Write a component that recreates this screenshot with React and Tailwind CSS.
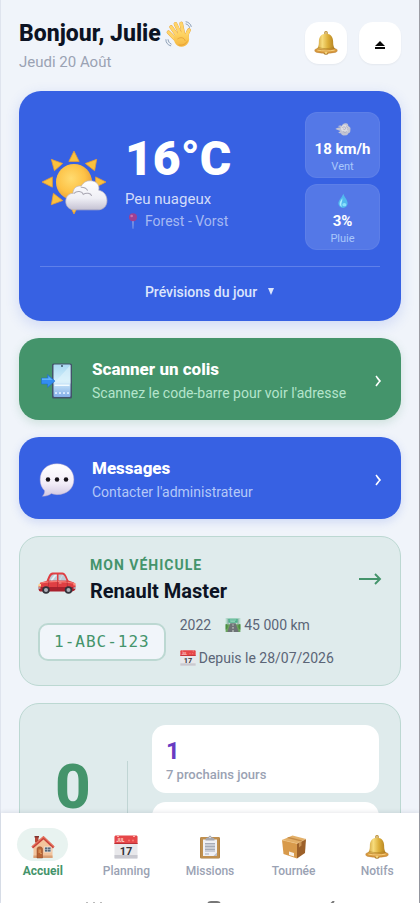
import React, { useState } from 'react';

const WaveIcon = ({ className }) => (
    <svg viewBox="0 0 64 64" className={className} aria-hidden="true">
        <defs>
            <linearGradient id="hand" x1="0" y1="0" x2="0" y2="1">
                <stop offset="0" stopColor="#ffd766" />
                <stop offset="1" stopColor="#f5b640" />
            </linearGradient>
        </defs>
        <g fill="none" stroke="#e3a03a" strokeWidth="8.5" strokeLinecap="round">
            <path d="M29 37 14 16M35 32 24 9M42 32 37 8M23 43 8 28M50 40c-1-6 1-11 5-17" />
        </g>
        <g fill="none" stroke="#ffd56a" strokeWidth="7" strokeLinecap="round">
            <path d="M29 37 14 16M35 32 24 9M42 32 37 8M23 43 8 28M50 40c-1-6 1-11 5-17" />
        </g>
        <path d="M19 38 33 28l12 3 8 5c3 5 3 11 0 16-5 9-16 12-24 7-6-4-9-12-10-21z" fill="url(#hand)" />
        <path d="M29 43c7-5 15-3 17 4M32 57c8 2 16-2 19-9" fill="none" stroke="#dc922b" strokeWidth="1.4" strokeLinecap="round" />
        <path d="M48 4c6 1 11 5 12 11M48 9c4 1 7 4 8 8M2 45c0 7 4 12 11 14M7 45c1 5 3 8 7 10" fill="none" stroke="#7189a5" strokeWidth="1.8" strokeLinecap="round" />
    </svg>
);

const BellIcon = ({ className }) => (
    <svg viewBox="0 0 64 64" className={className} aria-hidden="true">
        <defs>
            <linearGradient id="bell" x1="0" x2="1" y1="0" y2="0">
                <stop offset="0" stopColor="#c4902a" />
                <stop offset=".32" stopColor="#f7dc7c" />
                <stop offset=".6" stopColor="#dcae38" />
                <stop offset="1" stopColor="#a8741c" />
            </linearGradient>
        </defs>
        <circle cx="32" cy="5" r="3.5" fill="none" stroke="#b98b2c" strokeWidth="3" />
        <ellipse cx="32" cy="58" rx="7" ry="5" fill="#a0701e" />
        <path d="M32 7c-13 0-19 9-19 21 0 12-2 17-8 22v4h54v-4c-6-5-8-10-8-22C51 16 45 7 32 7z" fill="url(#bell)" />
        <path d="M11 44c13 4 29 4 42 0" fill="none" stroke="#b08024" strokeWidth="1.6" />
        <path d="M2 52c0-3 3-5 6-5 14 4 34 4 48 0 3 0 6 2 6 5s-3 5-6 5c-16 3-32 3-48 0-3 0-6-2-6-5z" fill="#d99a3e" stroke="#a4691f" />
        <path d="M9 51c15 3 31 3 46 0" fill="none" stroke="#ffe191" strokeWidth="2" />
        <ellipse cx="32" cy="58" rx="4" ry="3" fill="#f2d27a" />
    </svg>
);

const SunCloudIcon = ({ className }) => (
    <svg viewBox="-1 -3 66 66" className={className} aria-hidden="true">
        <defs>
            <radialGradient id="sun" cx=".42" cy=".4" r=".6">
                <stop offset="0" stopColor="#ffdb70" />
                <stop offset=".65" stopColor="#fdc246" />
                <stop offset="1" stopColor="#e9a23a" />
            </radialGradient>
            <linearGradient id="cloud" x1="0" y1="0" x2="0" y2="1">
                <stop offset="0" stopColor="#ffffff" />
                <stop offset=".6" stopColor="#efeff5" />
                <stop offset="1" stopColor="#c5c2d3" />
            </linearGradient>
        </defs>
        <g fill="#fbc13e" stroke="#e79d35" strokeWidth=".8" strokeLinejoin="round">
            <path d="m32 1 5 10H27zM54 9l-2 11-9-7zM63 31l-10 5V26zM54 53l-11-3 8-8zM32 62l-5-10h10zM10 53l2-11 9 7zM1 31l10-5v10zM10 9l11 4-8 7z" />
        </g>
        <circle cx="32" cy="31" r="17.5" fill="url(#sun)" />
        <path d="M32 58c-5 0-8-4-8-8 0-5 3-8 7-8 0-5 4-8 8-7 2-4 6-6 11-5 5 1 7 5 6 9 5 1 8 5 8 10 0 6-4 9-9 9z" fill="url(#cloud)" stroke="#b9b4bf" strokeWidth=".7" />
        <path d="M32 42c3-3 8-2 9 1 3-2 7-1 8 1M39 36c3 0 5 1 6 3" fill="none" stroke="#aaa8b3" strokeWidth="1" strokeLinecap="round" />
    </svg>
);

const PinIcon = ({ className }) => (
    <svg viewBox="0 0 32 48" className={className} aria-hidden="true">
        <path d="M14 22h4l-1 25h-2z" fill="#9eb1e3" />
        <circle cx="16" cy="13" r="12" fill="#9e3f93" />
        <circle cx="12" cy="9" r="4" fill="#c96faf" />
    </svg>
);

const WindIcon = ({ className }) => (
    <svg viewBox="0 0 48 48" className={className} aria-hidden="true">
        <path d="M1 24c5-3 10-4 15-5-3-2-5-3-8-3 4-3 9-3 13-1 1-6 6-9 12-8 5 0 7 4 7 8 5 2 8 7 6 12 1 5-2 9-6 10-1 5-6 7-10 6-6 2-11-1-12-6-4 1-7-1-8-4 3 0 5-1 6-3-5-2-10-4-15-6z" fill="#c1c3d2" />
        <path d="M20 17c3-6 12-8 16-1 5 1 7 7 4 11-1 6-8 8-12 5-6 1-11-4-10-10 0-2 1-4 2-5z" fill="#dddce2" />
        <path d="M23 19c4-3 9-1 9 3s-5 5-7 2M34 17c5 1 7 6 4 10M25 32c3 3 7 3 10 0" fill="none" stroke="#a0a2b5" strokeWidth="2" strokeLinecap="round" />
    </svg>
);

const DropIcon = ({ className }) => (
    <svg viewBox="0 0 48 48" className={className} aria-hidden="true">
        <path d="M25 2c3 10 13 19 13 29 0 8-6 14-14 14s-14-6-14-14C10 22 21 13 25 2z" fill="#52b9ee" />
        <path d="M22 16c-4 6-8 10-8 16 0 5 3 8 7 9-5-8 2-14 1-25z" fill="#a9ecff" />
        <ellipse cx="28" cy="35" rx="6" ry="5" fill="#8ae2fb" />
    </svg>
);

const PhoneIcon = ({ className }) => (
    <svg viewBox="0 0 64 72" className={className} aria-hidden="true">
        <defs>
            <linearGradient id="screen" x1="0" y1="0" x2="0" y2="1">
                <stop offset="0" stopColor="#a9d9f2" />
                <stop offset=".5" stopColor="#d2eefa" />
                <stop offset="1" stopColor="#84aee9" />
            </linearGradient>
        </defs>
        <rect x="22" y="1" width="40" height="70" rx="3" fill="#435269" />
        <rect x="25" y="3" width="34" height="65" rx="2" fill="url(#screen)" />
        <path d="m25 42 34-38v37H25z" fill="#e2f4fb" opacity=".55" />
        <path d="M27 43h30v3H27z" fill="#f3fbff" />
        <circle cx="42" cy="6" r="1.8" fill="#35465b" />
        <g fill="#dcecff">
            <rect x="28" y="58" width="4" height="4" rx="1" />
            <rect x="36" y="58" width="4" height="4" rx="1" />
            <rect x="44" y="58" width="4" height="4" rx="1" />
            <rect x="52" y="58" width="4" height="4" rx="1" />
        </g>
        <path d="M1 30h12v-7l15 13-15 13v-7H1z" fill="#338df0" stroke="#2168c8" strokeLinejoin="round" />
        <path d="M2 31h13v-4l8 7H2z" fill="#5eb2fa" />
    </svg>
);

const BubbleIcon = ({ className }) => (
    <svg viewBox="0 0 64 60" className={className} aria-hidden="true">
        <defs>
            <linearGradient id="bubble" x1="0" y1="0" x2="0" y2="1">
                <stop offset="0" stopColor="#ffffff" />
                <stop offset=".6" stopColor="#f3edf8" />
                <stop offset="1" stopColor="#d1c8e1" />
            </linearGradient>
        </defs>
        <path d="M32 1C14 1 2 13 2 29c0 9 3 15 8 20 0 4-1 7-4 10 7 0 12-2 16-5 3 1 6 2 10 2 18 0 30-11 30-27S50 1 32 1z" fill="url(#bubble)" stroke="#b3a7cf" strokeWidth=".8" />
        <g fill="#171219">
            <circle cx="16" cy="29" r="4" />
            <circle cx="32" cy="29" r="4" />
            <circle cx="48" cy="29" r="4" />
        </g>
    </svg>
);

const CarIcon = ({ className }) => (
    <svg viewBox="0 0 76 44" className={className} aria-hidden="true">
        <path d="M17 18C21 8 23 2 29 1h20c6 1 8 7 12 16l11 4c3 3 4 8 3 14l-5 3H4c-3-3-4-8-2-12l3-5z" fill="#df3f43" />
        <path d="M22 17c2-6 4-11 8-12h8v12zM41 5h8c4 1 6 7 8 12H41z" fill="#bccbd7" />
        <path d="m26 16 7-10h4l-8 10zM44 16l5-10" fill="#e8f1f5" stroke="#e8f1f5" />
        <path d="M5 22c20-4 43-4 65 0" fill="none" stroke="#f67c74" strokeWidth="2.5" />
        <path d="M1 30h73v6l-5 3H4c-3-2-3-5-3-9z" fill="#a9212d" />
        <path d="M39 18v18M22 18l-2 15M58 18l1 12" fill="none" stroke="#9c2430" />
        <path d="M42 22h5" stroke="#f7c0ba" strokeWidth="1.5" />
        <path d="M1 24h5v5H1z" fill="#ffd38a" />
        <path d="M70 22h5v5h-4z" fill="#ff8a79" />
        <path d="M0 32h5M71 32h5" stroke="#b8bcc4" strokeWidth="3" />
        <g fill="#33333b">
            <circle cx="16" cy="36" r="7.5" />
            <circle cx="61" cy="36" r="7.5" />
        </g>
        <g fill="#aeb0b8">
            <circle cx="16" cy="36" r="4" />
            <circle cx="61" cy="36" r="4" />
        </g>
    </svg>
);

const RoadIcon = ({ className }) => (
    <svg viewBox="0 0 48 44" className={className} aria-hidden="true">
        <path d="M2 1h44v42H2z" fill="#b4dccb" />
        <path d="M2 20h44v23H2z" fill="#6ca65c" />
        <path d="m16 17-9 26h34l-9-26z" fill="#6d7276" />
        <path d="M24 20v4M24 28v5M24 37v6" stroke="#edf0e7" strokeWidth="2.5" />
        <path d="M9 3v20M39 3v20" stroke="#76838a" strokeWidth="2" />
        <rect x="10" y="3" width="28" height="12" rx="2" fill="#4fb08c" />
        <path d="M14 7h20M16 11h14" stroke="#d6f4e7" strokeWidth="1.6" />
        <path d="M2 20c6-2 7 5 5 12l-5 4zM46 20c-6-2-7 5-5 12l5 4z" fill="#4a8d42" />
    </svg>
);

const CalendarIcon = ({ className }) => (
    <svg viewBox="0 0 48 48" className={className} aria-hidden="true">
        <rect x="1" y="2" width="46" height="45" rx="2" fill="#e8e8eb" />
        <path d="M1 40h46v7H1z" fill="#c9c9d0" />
        <path d="M1 4c0-2 1-3 3-3h40c2 0 3 1 3 3v14H1z" fill="#e64749" />
        <path d="M1 16h46v2H1z" fill="#bb3037" />
        <path d="M6 3h4M38 3h4" stroke="#ffb0a8" strokeWidth="2" />
        <text x="5" y="14" fontFamily="Roboto, sans-serif" fontSize="9" fontWeight="700" fill="#ffdad5">JUL</text>
        <circle cx="30" cy="11" r="2" fill="#f87872" />
        <circle cx="38" cy="11" r="2" fill="#f87872" />
        <text x="24" y="40" textAnchor="middle" fontFamily="Roboto, sans-serif" fontSize="22" fontWeight="700" fill="#35353b">17</text>
    </svg>
);

const HouseIcon = ({ className }) => (
    <svg viewBox="0 0 48 48" className={className} aria-hidden="true">
        <path d="M8 3h7v12H8z" fill="#b64637" />
        <path d="M7 2h9v3H7z" fill="#7e3430" />
        <path d="M5 22 25 5l18 17v24H5z" fill="#f3c49c" />
        <path d="M5 41h38v5H5z" fill="#d9a177" />
        <path d="M25 2 1 23l3 4L25 9l19 18 3-4z" fill="#c8423b" />
        <path d="m25 2 22 21-2 1L25 5 3 24l-2-1z" fill="#e87961" />
        <path d="M12 46V28c0-6 11-6 11 0v18z" fill="#b96434" stroke="#8a4427" />
        <path d="M15 29h5v7h-5z" fill="#d58c53" />
        <circle cx="20" cy="37" r="1" fill="#ffe4a0" />
        <rect x="27" y="24" width="13" height="10" fill="#566779" stroke="#eee5dc" strokeWidth="1.5" />
        <path d="M33 24v10M27 29h13" stroke="#d2dae1" />
    </svg>
);

const ClipboardIcon = ({ className }) => (
    <svg viewBox="0 0 48 48" className={className} aria-hidden="true">
        <rect x="4" y="4" width="40" height="43" rx="3" fill="#a8793c" />
        <rect x="5" y="4" width="38" height="42" rx="2" fill="#c08f4e" />
        <path d="M10 9h28v33H10z" fill="#f0f0f5" />
        <path d="M38 35v7h-7z" fill="#bfc1cc" />
        <path d="M15 9c0-3 3-4 6-4 0-5 6-5 6 0 3 0 6 1 6 4v2H15z" fill="#a5a8b1" />
        <circle cx="24" cy="5" r="1.4" fill="#f3f3f6" />
        <path d="M14 17h20M14 20h20M14 23h20M14 26h20M14 29h20M14 32h20M14 38h8" stroke="#858c9d" strokeWidth="1.4" />
    </svg>
);

const BoxIcon = ({ className }) => (
    <svg viewBox="0 0 48 48" className={className} aria-hidden="true">
        <path d="M0 10 21 1l27 7-18 9z" fill="#e3b069" />
        <path d="m0 10 30 7v30L3 38z" fill="#d89a4b" />
        <path d="m30 17 18-9-2 28-16 11z" fill="#9c6029" />
        <path d="m10 6 28 7 3-2-27-7z" fill="#c58a45" />
        <path d="m34 15 5-3v9l-5 4z" fill="#c99252" />
        <path d="m0 10 30 7 18-9" fill="none" stroke="#f4c887" />
        <path d="m14 33 10 3v7l-10-3z" fill="#f8f2e9" />
    </svg>
);

const EjectIcon = ({ className }) => (
    <svg viewBox="0 0 12 10" className={className} aria-hidden="true">
        <path d="M6 1l5 5H1zM1 7h10v2H1z" fill="#080808" />
    </svg>
);

const ChevronIcon = ({ className }) => (
    <svg viewBox="0 0 8 12" className={className} fill="none" stroke="currentColor" strokeWidth="1.7" aria-hidden="true">
        <path d="M3 1c1 1 2 3 4 5-2 2-3 4-4 5" />
    </svg>
);

const ArrowIcon = ({ className }) => (
    <svg viewBox="0 0 24 14" className={className} fill="none" stroke="currentColor" strokeWidth="1.9" aria-hidden="true">
        <path d="M1 7h21M17 2l5 5-5 5" />
    </svg>
);

const tabs = [
    { id: 'accueil', label: 'Accueil', icon: HouseIcon },
    { id: 'planning', label: 'Planning', icon: CalendarIcon },
    { id: 'missions', label: 'Missions', icon: ClipboardIcon },
    { id: 'tournee', label: 'Tournée', icon: BoxIcon },
    { id: 'notifs', label: 'Notifs', icon: BellIcon },
];

function WeatherTile({ icon: Icon, value, label }) {
    return (
        <div className="flex h-[66px] flex-col items-center rounded-xl border border-white/5 bg-white/15 pt-2">
            <Icon className="h-4 w-4" />
            <span className="text-[15px] leading-6 font-bold text-white">{value}</span>
            <span className="text-[11px] leading-3 text-blue-200/80">{label}</span>
        </div>
    );
}

function ActionCard({ icon: Icon, title, subtitle, className, subtitleClass }) {
    return (
        <button className={`flex h-[82px] w-full items-center rounded-[20px] px-5 pt-1 text-left ${className}`}>
            <Icon className="h-9 w-9 shrink-0" />
            <span className="ml-[17px] flex-1">
                <span className="block text-[17px] leading-6 font-extrabold text-white">{title}</span>
                <span className={`block text-sm leading-6 ${subtitleClass}`}>{subtitle}</span>
            </span>
            <ChevronIcon className="h-3 w-2 text-white" />
        </button>
    );
}

function App() {
    const [activeTab, setActiveTab] = useState('accueil');

    return (
        <div className="flex h-screen flex-col border-r border-l border-r-[#9b9ca3] border-l-[#dfe4ee] bg-[#f0f4fa] font-[Roboto,sans-serif]">
            <main className="min-h-0 flex-1 overflow-y-auto px-[18px] pb-4 [scrollbar-width:none]">
                {/* Header */}
                <header className="flex items-start justify-between pt-[18px]">
                    <div>
                        <h1 className="flex items-center gap-1 text-[23px] leading-8 font-extrabold text-[#0c1323]">
                            Bonjour, Julie
                            <WaveIcon className="h-7 w-7" />
                        </h1>
                        <p className="text-[15px] leading-6 text-[#9aa2b3]">Jeudi 20 Août</p>
                    </div>
                    <div className="flex gap-3 pt-1">
                        <button aria-label="Notifications" className="flex h-[42px] w-[42px] items-center justify-center rounded-[14px] bg-white shadow-xs">
                            <BellIcon className="h-6 w-6" />
                        </button>
                        <button aria-label="Déconnexion" className="flex h-[42px] w-[42px] items-center justify-center rounded-[14px] bg-white pt-1 shadow-xs">
                            <EjectIcon className="h-[10px] w-3" />
                        </button>
                    </div>
                </header>

                {/* Weather */}
                <section className="mt-[17px] rounded-[22px] bg-[#3761e3] px-[21px] pt-[21px] pb-[17px] shadow-[0_4px_14px_rgba(55,97,227,0.18)]">
                    <div className="flex items-center">
                        <SunCloudIcon className="h-[68px] w-[68px]" />
                        <div className="ml-[17px] flex-1">
                            <p className="text-5xl leading-[56px] font-black text-white">16°C</p>
                            <p className="text-[15px] leading-6 text-[#d2dcfa]">Peu nuageux</p>
                            <p className="flex items-center gap-1 text-sm leading-5 text-[#a6b9f2]">
                                <PinIcon className="h-4 w-4" />
                                Forest - Vorst
                            </p>
                        </div>
                        <div className="flex w-[75px] flex-col gap-[6px]">
                            <WeatherTile icon={WindIcon} value="18 km/h" label="Vent" />
                            <WeatherTile icon={DropIcon} value="3%" label="Pluie" />
                        </div>
                    </div>
                    <div className="mt-4 border-t border-[#5e80ea] pt-[13px]">
                        <button className="flex w-full items-center justify-center gap-[10px] text-sm leading-6 font-medium text-[#dce5fc]">
                            Prévisions du jour
                            <svg viewBox="0 0 8 8" className="h-2 w-2" aria-hidden="true">
                                <path d="M1 0h6L4 7z" fill="currentColor" />
                            </svg>
                        </button>
                    </div>
                </section>

                {/* Actions */}
                <div className="mt-[17px] flex flex-col gap-[17px]">
                    <ActionCard
                        icon={PhoneIcon}
                        title="Scanner un colis"
                        subtitle="Scannez le code-barre pour voir l'adresse"
                        className="bg-[#44946b] shadow-[0_3px_10px_rgba(68,148,107,0.2)]"
                        subtitleClass="text-[#b4e5cb]"
                    />
                    <ActionCard
                        icon={BubbleIcon}
                        title="Messages"
                        subtitle="Contacter l'administrateur"
                        className="bg-[#3761e3] shadow-[0_3px_10px_rgba(55,97,227,0.18)]"
                        subtitleClass="text-[#b4c8f8]"
                    />
                </div>

                {/* Vehicle */}
                <section className="mt-[17px] rounded-[20px] border border-[#bcd8d2] bg-[#dfebec] px-[18px] pt-4 pb-[15px]">
                    <div className="flex items-center">
                        <CarIcon className="mt-2 h-[22px] w-[38px]" />
                        <div className="ml-[14px] flex-1">
                            <p className="text-sm leading-6 font-bold tracking-[1px] text-[#44946b]">MON VÉHICULE</p>
                            <h2 className="text-xl leading-7 font-bold text-[#0c1323]">Renault Master</h2>
                        </div>
                        <ArrowIcon className="h-[14px] w-6 text-[#44946b]" />
                    </div>
                    <div className="mt-2 flex items-center gap-[14px] text-sm text-[#5b6577]">
                        <p className="rounded-[10px] border-2 border-[#bcd8d2] bg-[#f1f5fa] px-[14px] py-[5px] font-['DejaVu_Sans_Mono',monospace] text-base leading-6 tracking-[1px] text-[#44946b]">
                            1-ABC-123
                        </p>
                        <div className="flex flex-col gap-[9px] leading-6">
                            <p className="flex items-center gap-[14px]">
                                <span>2022</span>
                                <span className="flex items-center gap-[3px]">
                                    <RoadIcon className="h-4 w-4" />
                                    45 000 km
                                </span>
                            </p>
                            <p className="flex items-center gap-[3px]">
                                <CalendarIcon className="h-4 w-4" />
                                Depuis le 28/07/2026
                            </p>
                        </div>
                    </div>
                </section>

                {/* Missions */}
                <section className="mt-[17px] flex rounded-[20px] border border-[#bcd8d2] bg-[#dfebec] p-[21px]">
                    <p className="w-16 pt-[38px] text-center text-[62px] leading-[48px] font-extrabold text-[#44946b]">0</p>
                    <div className="mt-9 ml-[22px] h-24 w-px bg-[#c0d5d4]"></div>
                    <div className="ml-6 flex flex-1 flex-col gap-[9px]">
                        <div className="rounded-[14px] bg-white px-[14px] py-[10px]">
                            <p className="text-2xl leading-8 font-bold text-[#683bc2]">1</p>
                            <p className="text-[13px] leading-4 font-medium text-[#9aa2b3]">7 prochains jours</p>
                        </div>
                        <div className="h-[68px] rounded-[14px] bg-white"></div>
                    </div>
                </section>
            </main>

            {/* Bottom bar */}
            <footer className="shrink-0 bg-white shadow-[0_-1px_4px_rgba(20,30,60,0.1)]">
                <nav className="grid grid-cols-5 pt-[15px]">
                    {tabs.map(({ id, label, icon: Icon }) => (
                        <button key={id} onClick={() => setActiveTab(id)} className="flex flex-col items-center">
                            <span className={`flex h-[33px] w-[51px] items-center justify-center rounded-full pt-1 ${activeTab === id ? 'bg-[#e8f3f0]' : ''}`}>
                                <Icon className="h-6 w-6" />
                            </span>
                            <span className={`text-xs leading-5 ${activeTab === id ? 'font-bold text-[#44946b]' : 'font-medium text-[#9aa2b3]'}`}>
                                {label}
                            </span>
                        </button>
                    ))}
                </nav>
                {/* System keys, mostly below the screen edge */}
                <div className="mt-5 flex h-[2px] items-start justify-between overflow-hidden px-[84px] text-[#777777]">
                    <svg viewBox="0 0 18 16" className="h-4 w-[18px] shrink-0" fill="none" stroke="currentColor" strokeWidth="1" aria-hidden="true">
                        <path d="M2 1v15M9 1v15M16 1v15" />
                    </svg>
                    <svg viewBox="0 0 16 16" className="h-4 w-4 shrink-0" fill="none" stroke="currentColor" strokeWidth="2" aria-hidden="true">
                        <rect x="2" y="1" width="12" height="14" rx="3" />
                    </svg>
                    <svg viewBox="0 0 10 16" className="h-4 w-[10px] shrink-0" fill="none" stroke="currentColor" strokeWidth="2" aria-hidden="true">
                        <path d="M9 0 1 8l8 8" />
                    </svg>
                </div>
            </footer>
        </div>
    );
}

export default App;
